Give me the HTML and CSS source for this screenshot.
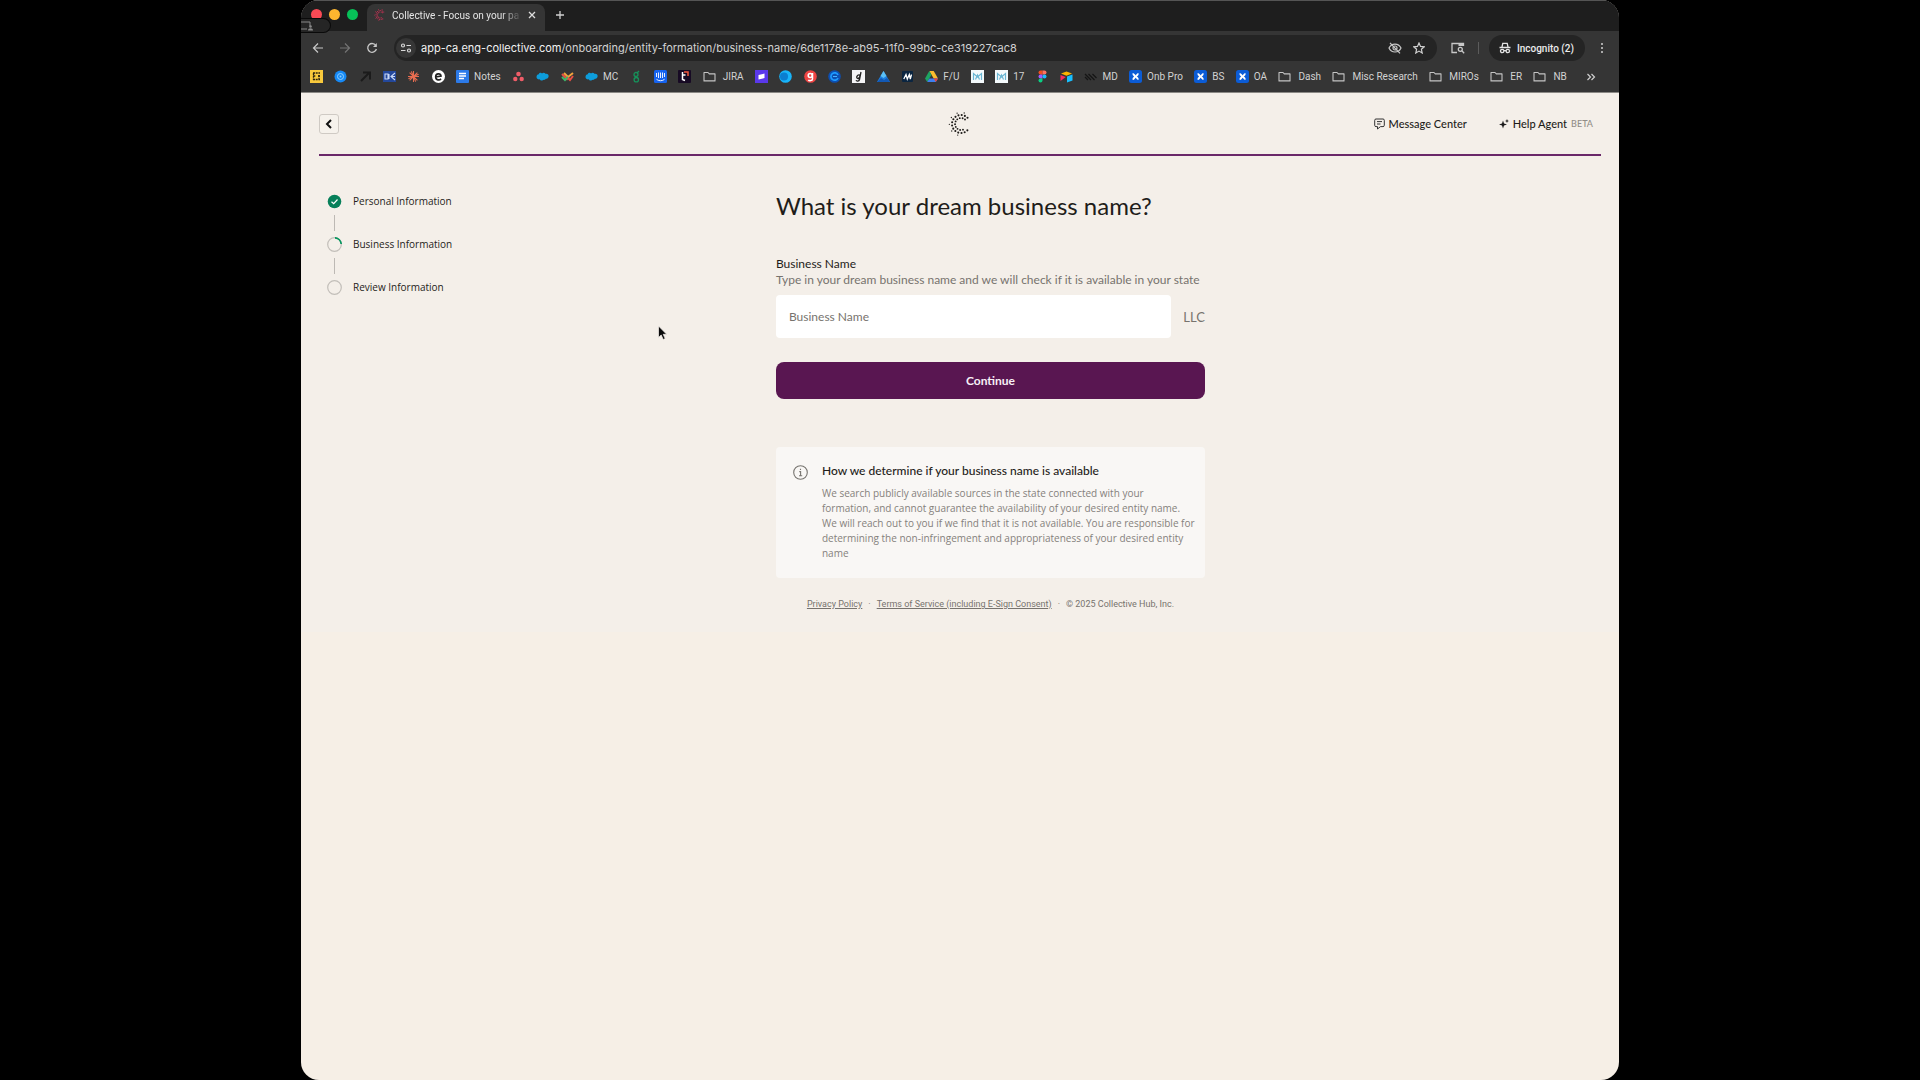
FILE: index.html
```html
<!DOCTYPE html>
<html lang="en">
<head>
<meta charset="utf-8">
<title>Collective - Focus on your passion</title>
<link rel="stylesheet" href="styles.css">
</head>
<body>
<svg class="defs" aria-hidden="true">
  <symbol id="folder" viewBox="0 0 13 13"><path d="M1 2.500h4l1.300 1.400H12v7H1z" fill="none" stroke="#c4c4c4" stroke-width="1.100" stroke-linejoin="round"/></symbol>
  <symbol id="cloud" viewBox="0 0 13 13"><path d="M2.800 4.200C3.200 2.600 5.300 2.500 6 3.500 7 2.300 8.800 2.600 9.400 3.800 11.300 3.200 13 4.600 12.600 6.500 12.400 8.200 11 8.900 9.900 8.800 9.200 10 7.900 10.100 7.200 9.700 6.400 11 4.300 10.800 3.800 9.300 2.200 9.700.5 8.600.5 6.900.5 5.500 1.400 4.300 2.800 4.200z" fill="#0d9ddb"/></symbol>
  <symbol id="cross" viewBox="0 0 13 13"><rect width="13" height="13" rx="2.500" fill="#0b5cd6"/><path d="M3.600 4c1.500 0 2 2.500 3 2.500S8 4 9.500 4M3.600 9c1.500 0 2-2.500 3-2.500S8 9 9.500 9" fill="none" stroke="#fff" stroke-width="2"/></symbol>
  <symbol id="moxie" viewBox="0 0 13 13"><rect width="13" height="13" fill="#f4fafc"/><path d="M2.500 10V3.500L6.500 7l4-3.500V10M4.500 9.500L6.500 5l2 4.500" fill="none" stroke="#6ab6d3" stroke-width="1.200"/></symbol>
  <symbol id="ring" viewBox="-13 -12 24 24"><g fill="none" stroke="currentColor" stroke-linecap="round"><path d="M6.500 -6.200A9 9 0 1 0 6.500 6.200" stroke-width="2.100" stroke-dasharray="0 3.260"/><path d="M4 -4.500A6 6 0 1 0 4 4.500" stroke-width="1.900" stroke-dasharray="0 2.720"/><path d="M3.200 -11A11.500 11.500 0 1 0 3.200 11" stroke-width="1.300" stroke-dasharray="0 7.200"/></g></symbol>
</svg>
<div class="window">
  <header class="browser">
    <div class="tabstrip">
      <div class="lights"><i class="light red"></i><i class="light amber"></i><i class="light green"></i></div>
      <div class="share"><svg viewBox="0 0 12 10" width="12" height="10"><path d="M0 1h9v4M0 8h6" fill="none" stroke="#8a8a8a"/><circle cx="9.500" cy="5.500" r="1.300" fill="#8a8a8a"/><path d="M7 9.500c0-3 5-3 5 0z" fill="#8a8a8a"/></svg></div>
      <div class="tab">
        <svg class="tab-logo" width="12" height="12"><use href="#ring"/></svg>
        <span class="tab-title">Collective - Focus on your pa</span>
        <button class="plain" aria-label="Close tab"><svg width="8" height="8" viewBox="0 0 8 8"><path d="M1 1l6 6M7 1L1 7" stroke="#ddd" stroke-width="1.300"/></svg></button>
      </div>
      <button class="plain new-tab" aria-label="New tab"><svg width="10" height="10" viewBox="0 0 10 10"><path d="M5 1v8M1 5h8" stroke="#d0d0d0" stroke-width="1.300"/></svg></button>
    </div>
    <div class="toolbar">
      <nav class="nav">
        <button class="plain" aria-label="Back"><svg width="12" height="12" viewBox="0 0 12 12"><path d="M11 6H1.500M6 1.500L1.500 6 6 10.500" fill="none" stroke="#c8c8c8" stroke-width="1.200"/></svg></button>
        <button class="plain" aria-label="Forward"><svg width="12" height="12" viewBox="0 0 12 12"><path d="M1 6h9.500M6 1.500L10.500 6 6 10.500" fill="none" stroke="#747474" stroke-width="1.200"/></svg></button>
        <button class="plain" aria-label="Reload"><svg width="12" height="12" viewBox="0 0 12 12"><path d="M10 3.800A4.400 4.400 0 1 0 10.400 7" fill="none" stroke="#c8c8c8" stroke-width="1.300"/><path d="M10.800 1v4H7z" fill="#c8c8c8"/></svg></button>
      </nav>
      <div class="omnibox">
        <span class="chip"><svg width="12" height="10" viewBox="0 0 12 10"><g fill="none" stroke="#d8d8d8" stroke-width="1.200"><circle cx="3" cy="2.500" r="1.500"/><path d="M6.500 2.500H11M1 7.500h4.500"/><circle cx="9" cy="7.500" r="1.500"/></g></svg></span>
        <span class="url"><span class="host">app-ca.eng-collective.com</span>/onboarding/entity-formation/business-name/6de1178e-ab95-11f0-99bc-ce319227cac8</span>
        <svg width="14" height="12" viewBox="0 0 14 12"><g fill="none" stroke="#c8c8c8" stroke-width="1.200"><path d="M1 6c2.500-5.300 9.500-5.300 12 0-2.500 5.300-9.500 5.300-12 0z"/><circle cx="7" cy="6" r="2"/><path d="M2 .8l10 10.500"/></g></svg>
        <svg width="12" height="12" viewBox="0 0 12 12"><path d="M6 1l1.500 3.400 3.700.4-2.800 2.500.8 3.700L6 9.100 2.800 11l.8-3.700L.8 4.800l3.700-.4z" fill="none" stroke="#d0d0d0" stroke-width="1.200"/></svg>
      </div>
      <svg width="14" height="12" viewBox="0 0 14 12"><path d="M6 10.500H1v-9h11.500V4" fill="none" stroke="#c8c8c8" stroke-width="1.300"/><path d="M7.500 1H13v3H7.500z" fill="#c8c8c8"/><circle cx="9.300" cy="7.300" r="2" fill="none" stroke="#c8c8c8" stroke-width="1.300"/><path d="M10.800 8.800l2.400 2.500" stroke="#c8c8c8" stroke-width="1.300"/></svg>
      <span class="divider"></span>
      <button class="incognito"><svg width="12" height="12" viewBox="0 0 12 12"><path d="M3 5l.8-3.700h4.400L9 5M.5 5.500h11" fill="none" stroke="#e4e4e4" stroke-width="1.300"/><g fill="none" stroke="#e4e4e4" stroke-width="1.300"><circle cx="3.200" cy="9" r="1.700"/><circle cx="8.800" cy="9" r="1.700"/><path d="M5 8.700h2"/></g></svg>Incognito (2)</button>
      <button class="plain menu" aria-label="Menu"><svg width="4" height="12" viewBox="0 0 4 12" fill="#d0d0d0"><circle cx="2" cy="2" r="1"/><circle cx="2" cy="6" r="1"/><circle cx="2" cy="10" r="1"/></svg></button>
    </div>
    <nav class="bookmarks">
      <ul class="marks">
        <li><svg viewBox="0 0 13 13"><path fill="#f8c93c" d="M0 0h13v13H0z"/><path d="M3 3h7M3 6h3M8 6h2M3 9.500h7M3.500 3v7M9 5v5" stroke="#2b2410" stroke-width="1.300" stroke-dasharray="2 .7"/></svg></li>
        <li><svg viewBox="0 0 13 13"><circle cx="6.500" cy="6.500" r="6" fill="#1689f5"/><circle cx="6.500" cy="6.500" r="3" fill="none" stroke="#8ed0ff"/><circle cx="6.500" cy="6.500" r="1" fill="#8ed0ff"/></svg></li>
        <li><svg viewBox="0 0 13 13"><path d="M2 11l8-8M4 2.500h7v7" fill="none" stroke="#1b1b1b" stroke-width="2"/></svg></li>
        <li><svg viewBox="0 0 13 13"><path fill="#24489b" d="M0 1h13v11H0z"/><path d="M2 4h3v5H2zM6 4v5M12 3L8 6.500 12 10M8 6.500h4" fill="none" stroke="#c9d8f5" stroke-width="1.100"/></svg></li>
        <li><svg viewBox="0 0 13 13"><path d="M6.500 1v11M1 6.500h11M2.600 2.600l7.800 7.800M10.400 2.600l-7.800 7.800M4.300 1.400l4.400 10.200M1.400 8.700l10.200-4.400" stroke="#e86d50" stroke-width="1.100"/></svg></li>
        <li><svg viewBox="0 0 13 13"><circle cx="6.500" cy="6.500" r="6.500" fill="#fff"/><path d="M3.500 7l5.500-1c-.3-3-5.300-3-5.300.8 0 3.800 4 3.600 5.300 1.900" fill="none" stroke="#222" stroke-width="1.700"/></svg></li>
        <li><svg viewBox="0 0 13 13"><rect width="13" height="13" rx="1" fill="#2c7ae8"/><path d="M3 3.500h7M3 6h7M3 8.500h5" stroke="#fff" stroke-width="1.300"/></svg><a href="#">Notes</a></li>
        <li><svg viewBox="0 0 13 13" fill="#ef5d68"><circle cx="6.500" cy="4" r="2.300"/><circle cx="3.300" cy="9" r="2.200"/><circle cx="9.700" cy="9" r="2.200"/></svg></li>
        <li><svg><use href="#cloud"/></svg></li>
        <li><svg viewBox="0 0 13 13"><g fill="none" stroke-width="2"><path d="M1 4l5 5 2-2" stroke="#e95045"/><path d="M3 3l4 4 5-4" stroke="#f2a43d"/><path d="M1 7l3 3 3-3" stroke="#3db66a"/><path d="M7 8l2 2 3-4" stroke="#e95045"/></g></svg></li>
        <li><svg><use href="#cloud"/></svg><a href="#">MC</a></li>
        <li><svg viewBox="0 0 13 13"><g fill="none" stroke="#17905a" stroke-width="1.300"><circle cx="6" cy="4.500" r="2"/><circle cx="6.300" cy="9.700" r="2.200"/><path d="M7 3l2-2M5 6.500l3 1.500"/></g></svg></li>
        <li><svg viewBox="0 0 13 13"><rect width="13" height="13" rx="1.500" fill="#1663ef"/><path d="M2.500 3v4M4.500 2.500v5.500M6.500 2.500V8M8.500 2.500V8M10.500 3v4M2.500 9.300c2 1.900 6 1.900 8 0" fill="none" stroke="#fff" stroke-width=".9"/></svg></li>
        <li><svg viewBox="0 0 13 13"><rect width="13" height="13" rx="1" fill="#170a24"/><path d="M4.500 2v7.500L7 10.500M4.500 5h3" fill="none" stroke="#fff" stroke-width="1.500"/><path d="M6 2h4v4" fill="none" stroke="#f2553c" stroke-width="1.500"/></svg></li>
        <li class="folder"><svg><use href="#folder"/></svg><a href="#">JIRA</a></li>
        <li><svg viewBox="0 0 13 13"><path fill="#5a38ea" d="M0 0h13v13H0z"/><path d="M3.500 5l6-1.500V8l-6 1.500z" fill="#fff"/></svg></li>
        <li><svg viewBox="0 0 13 13"><circle cx="6.500" cy="6.500" r="6.300" fill="#18b4fa"/><circle cx="5" cy="6.500" r="4" fill="#0b7ed0"/></svg></li>
        <li><svg viewBox="0 0 13 13"><circle cx="6.500" cy="6.500" r="6.300" fill="#ef4443"/><circle cx="6.200" cy="5.600" r="2" fill="none" stroke="#fff" stroke-width="1.500"/><path d="M8.500 3v6c0 2-3.500 2-4.200.8" fill="none" stroke="#fff" stroke-width="1.500"/></svg></li>
        <li><svg viewBox="0 0 13 13"><circle cx="6.500" cy="6.500" r="6.300" fill="#0d4fb2"/><path d="M10 5a3.700 3.700 0 1 0 0 3" fill="none" stroke="#1d9bff" stroke-width="1.700"/><path d="M5 6.500h4" stroke="#48b5ff"/></svg></li>
        <li><svg viewBox="0 0 13 13"><path fill="#f4f4f6" d="M0 0h13v13H0z"/><path d="M9 2L7.500 9.500c-.4 2-3 1.800-3.500.8M8 5c-3-1-4.500 3.500-2 3.500 1.300 0 2-1.500 2-3.500z" fill="none" stroke="#222" stroke-width="1.300"/></svg></li>
        <li><svg viewBox="0 0 13 13"><path d="M6.500 1L13 12H0z" fill="#1e7fe0"/><path d="M6.500 1l3 5-3 2-3-2z" fill="#5cc0f5"/><path d="M0 12l4-4 3 2 3-2 3 4z" fill="#1259b5"/></svg></li>
        <li><svg viewBox="0 0 13 13"><rect x="1" y="1" width="11" height="11" rx="1" fill="#0b2540"/><path d="M2.800 9L5 4.500 6.300 9l2-4.500L9.300 9l1.200-4.500" fill="none" stroke="#fff" stroke-width="1.300"/></svg></li>
        <li><svg viewBox="0 0 13 13"><path d="M4.300 1h4.400L13 8.500H8.700z" fill="#fbbc2d"/><path d="M4.300 1L0 8.500 2.200 12 6.500 4.800z" fill="#1ea362"/><path d="M4.300 8.500H13L10.800 12H2.200z" fill="#3d7ff0"/><path d="M8.700 8.500H13L10.800 12z" fill="#e8453c"/></svg><a href="#">F/U</a></li>
        <li><svg><use href="#moxie"/></svg></li>
        <li><svg><use href="#moxie"/></svg><a href="#">17</a></li>
        <li><svg viewBox="0 0 13 13"><path d="M6.500.5h-2a2 2 0 0 0 0 4h2z" fill="#f24e1e"/><path d="M6.500.5h2a2 2 0 0 1 0 4h-2z" fill="#ff7262"/><path d="M6.500 4.500h-2a2 2 0 0 0 0 4h2z" fill="#a259ff"/><circle cx="8.500" cy="6.500" r="2" fill="#1abcfe"/><path d="M6.500 8.500h-2a2 2 0 1 0 2 2z" fill="#0acf83"/></svg></li>
        <li><svg viewBox="0 0 13 13"><path d="M1 3.500L6.500 1.500 12 3.500 6.500 5.700z" fill="#fcb400"/><path d="M7 6.500l5.500-2v6L7 12.500z" fill="#18bfff"/><path d="M.5 5L5.800 7 .5 11z" fill="#f82b60"/></svg></li>
        <li><svg viewBox="0 0 13 13"><path d="M1 4l6 6M4.500 4l6 6M8.500 4l4 4M1 7l3 3" stroke="#151515" stroke-width="1.300"/></svg><a href="#">MD</a></li>
        <li><svg><use href="#cross"/></svg><a href="#">Onb Pro</a></li>
        <li><svg><use href="#cross"/></svg><a href="#">BS</a></li>
        <li><svg><use href="#cross"/></svg><a href="#">OA</a></li>
        <li class="folder"><svg><use href="#folder"/></svg><a href="#">Dash</a></li>
        <li class="folder"><svg><use href="#folder"/></svg><a href="#">Misc Research</a></li>
        <li class="folder"><svg><use href="#folder"/></svg><a href="#">MIROs</a></li>
        <li class="folder"><svg><use href="#folder"/></svg><a href="#">ER</a></li>
        <li class="folder"><svg><use href="#folder"/></svg><a href="#">NB</a></li>
      </ul>
      <button class="plain" aria-label="More bookmarks"><svg width="10" height="8" viewBox="0 0 10 8"><path d="M1.500 1l3 3-3 3M5.500 1l3 3-3 3" fill="none" stroke="#d0d0d0" stroke-width="1.200"/></svg></button>
    </nav>
  </header>

  <div class="page">
    <header class="site-header">
      <button class="back" aria-label="Go back"><svg width="8" height="10" viewBox="0 0 8 10"><path d="M6 1L2 5l4 4" fill="none" stroke="#111" stroke-width="2"/></svg></button>
      <svg class="logo" width="24" height="24" role="img" aria-label="Collective"><use href="#ring"/></svg>
      <nav class="site-links">
        <a href="#"><svg width="11" height="12" viewBox="0 0 11 12"><path d="M2 1h7a1.300 1.300 0 0 1 1.300 1.300v5A1.300 1.300 0 0 1 9 8.600H6.500L3.500 11V8.600H2A1.300 1.300 0 0 1 .7 7.300v-5A1.300 1.300 0 0 1 2 1zM3 3.600h5M3 6h3.500" fill="none" stroke="#333" stroke-width="1"/></svg>Message Center</a>
        <a href="#"><svg width="10" height="12" viewBox="0 0 10 12"><path d="M4 2.500l1 3 3 1-3 1-1 3-1-3-3-1 3-1zM8 1l.6 1.400L10 3l-1.400.6L8 5l-.6-1.400L6 3l1.400-.6z" fill="#1a1a1a"/></svg>Help Agent <small>BETA</small></a>
      </nav>
    </header>
    <div class="columns">
      <ol class="steps">
        <li><svg width="15" height="15" viewBox="0 0 15 15"><circle cx="7.500" cy="7.500" r="6.800" fill="#07805a"/><path d="M4.500 7.700l2.200 2 3.800-4.200" fill="none" stroke="#fff" stroke-width="1.200"/></svg>Personal Information</li>
        <li><svg width="15" height="15" viewBox="0 0 15 15" fill="none" stroke-width="1.200"><circle cx="7.500" cy="7.500" r="6.800" stroke="#c2beb9"/><path d="M8 .8a6.700 6.700 0 0 1 6.200 6.200" stroke="#07965f" stroke-width="1.700"/></svg>Business Information</li>
        <li><svg width="15" height="15" viewBox="0 0 15 15"><circle cx="7.500" cy="7.500" r="6.800" fill="none" stroke="#c2beb9" stroke-width="1.200"/></svg>Review Information</li>
      </ol>
      <main class="content">
        <h1>What is your dream business name?</h1>
        <form>
          <label for="name">Business Name</label>
          <p class="hint" id="hint">Type in your dream business name and we will check if it is available in your state</p>
          <div class="field"><input id="name" type="text" placeholder="Business Name" aria-describedby="hint"><span>LLC</span></div>
          <button class="continue" type="button">Continue</button>
        </form>
        <aside class="note">
          <svg width="15" height="15" viewBox="0 0 15 15"><circle cx="7.500" cy="7.500" r="6.800" fill="none" stroke="#77746f" stroke-width="1.100"/><path d="M6.300 6.600h1.300v4M6 10.700h3.200M7.500 3.800v1.300" fill="none" stroke="#77746f" stroke-width="1.100"/></svg>
          <div>
            <h2>How we determine if your business name is available</h2>
            <p>We search publicly available sources in the state connected with your<br>formation, and cannot guarantee the availability of your desired entity name.<br>We will reach out to you if we find that it is not available. You are responsible for<br>determining the non-infringement and appropriateness of your desired entity<br>name</p>
          </div>
        </aside>
        <footer class="legal"><a href="#">Privacy Policy</a><span>·</span><a href="#">Terms of Service (including E-Sign Consent)</a><span>·</span><span>© 2025 Collective Hub, Inc.</span></footer>
      </main>
    </div>
  </div>
</div>
<svg class="pointer" width="12" height="16" viewBox="0 0 12 16"><path d="M1.500 1v11.500L4.200 10l2 4.500 2-.9-2-4.300h3.500z" fill="#0b0b0b" stroke="#f8f4ef" stroke-width=".7"/></svg>
</body>
</html>
```
FILE: styles.css
```css
* { box-sizing: border-box; }
body { margin: 0; background: #000; padding: 0 301px; font-family: Lato, sans-serif; color: #1f1d1a; }
ul, ol { list-style: none; margin: 0; padding: 0; }
svg { display: block; flex: none; }
a { color: inherit; text-decoration: none; }
button { font: inherit; }
.defs { position: absolute; width: 0; height: 0; }
.plain { display: flex; padding: 0; border: 0; background: none; }

.window { display: flex; flex-direction: column; min-height: 100vh; overflow: hidden; border-radius: 18px; background: #f6efe6; }

.browser { background: #353535; border-top: 1px solid #555; border-bottom: 1px solid #8b8985; font-family: Roboto, sans-serif; color: #d2d2d2; }
.tabstrip { position: relative; display: flex; align-items: stretch; height: 30px; padding: 3px 10px 0; background: #1e1e1e; }
.lights { display: flex; gap: 7px; width: 56px; padding-top: 5px; }
.light { width: 11px; height: 11px; border-radius: 50%; }
.red { background: #fb4a55; }
.amber { background: #fdb62f; }
.green { background: #07c158; }
.share { position: absolute; left: 0; top: 17px; width: 30px; height: 15px; padding-top: 2px; border: 1px solid #0a0a0a; border-left: 0; border-radius: 0 8px 8px 0; background: #252525; }
.tab { display: flex; align-items: center; gap: 6px; width: 178px; padding: 0 9px 5px 7px; border-radius: 8px 8px 0 0; background: #353535; }
.tab-logo { color: #e0305a; }
.tab-title { flex: 1; white-space: nowrap; font-size: 10px; color: #e4e4e4; -webkit-mask-image: linear-gradient(90deg, #000 84%, transparent); mask-image: linear-gradient(90deg, #000 84%, transparent); }
.new-tab { padding: 6px 10px; }
.toolbar { display: flex; align-items: center; height: 34px; padding: 0 15px 0 11px; }
.nav { display: flex; gap: 15px; width: 82px; }
.omnibox { display: flex; flex: 1; align-items: center; gap: 11px; height: 26px; margin-right: 14px; padding: 0 12px 0 2px; border-radius: 13px; background: #242424; }
.chip { display: grid; place-items: center; width: 20px; height: 20px; border-radius: 50%; background: #363636; }
.url { flex: 1; margin-left: -6px; white-space: nowrap; font-family: Inter, sans-serif; font-size: 11px; }
.host { color: #f2f2f2; }
.divider { width: 1px; height: 12px; margin: 0 10px 0 13px; background: #5c5c5c; }
.incognito { display: flex; align-items: center; gap: 6px; height: 26px; padding: 0 11px 0 10px; border: 0; border-radius: 13px; background: #242424; color: #ececec; font-size: 10px; font-weight: 500; white-space: nowrap; }
.menu { margin-left: 15px; }
.bookmarks { display: flex; align-items: center; height: 27px; padding: 0 23px 4px 9px; font-size: 10px; }
.marks { display: flex; flex: 1; justify-content: space-between; margin-right: 19px; }
.marks li { display: flex; align-items: center; gap: 5px; white-space: nowrap; }
.marks .folder { gap: 7px; }
.marks svg { width: 13px; height: 13px; }

.page { padding: 0 18px 22px; background: #f4efe9; }
.site-header { display: grid; grid-template-columns: 1fr auto 1fr; align-items: center; height: 63px; border-bottom: 2px solid #6a2869; }
.back { display: grid; place-items: center; width: 20px; height: 20px; padding: 0; border: 1px solid #cfcac4; border-radius: 3px; background: #f6f2ec; }
.site-links { display: flex; justify-content: flex-end; gap: 32px; padding-right: 8px; font-size: 11px; font-weight: 500; }
.site-links a { display: flex; align-items: center; gap: 4px; }
.site-links small { font-size: 9px; color: #918d87; }

.columns { display: grid; grid-template-columns: 15fr 429px 13fr; }
.steps { padding: 38px 0 0 8px; font-family: "Open Sans", sans-serif; font-size: 10px; line-height: 15px; }
.steps li { display: flex; gap: 11px; margin-bottom: 28px; position: relative; }
.steps li + li::before { content: ""; position: absolute; left: 7px; top: -22px; width: 1px; height: 16px; background: #bdb9b4; }
.content { padding-top: 34px; }
h1 { margin: 0 0 34px; font-size: 24px; font-weight: 400; line-height: 32px; white-space: nowrap; }
label { display: block; font-size: 12px; line-height: 16px; }
.hint { margin: 0 0 7px; font-size: 12px; line-height: 16px; color: #77736e; white-space: nowrap; }
.field { display: flex; align-items: center; gap: 12px; margin-bottom: 24px; font-size: 13px; color: #77736e; }
.field input { flex: 1; min-width: 0; height: 43px; padding: 0 13px; border: 0; border-radius: 4px; background: #fff; font: 12px Lato, sans-serif; }
.field input::placeholder { color: #77736e; opacity: 1; }
.continue { display: block; width: 100%; height: 37px; border: 0; border-radius: 8px; background: #591651; color: #f7eff6; font-size: 12px; font-weight: 700; }
.note { display: flex; gap: 14px; margin-top: 48px; padding: 16px 12px 17px 17px; border-radius: 4px; background: #f9f7f5; }
.note svg { margin-top: 2px; }
h2 { margin: 0 0 7px; font-size: 12px; font-weight: 500; line-height: 16px; white-space: nowrap; }
.note p { margin: 0; font-family: "Open Sans", sans-serif; font-size: 10px; line-height: 15px; color: #85817c; white-space: nowrap; }
.legal { display: flex; justify-content: center; gap: 6px; margin-top: 20px; font-family: Roboto, sans-serif; font-size: 9px; line-height: 12px; color: #77736e; white-space: nowrap; }
.legal a { text-decoration: underline; }
.pointer { position: absolute; left: 657px; top: 325px; }
```
